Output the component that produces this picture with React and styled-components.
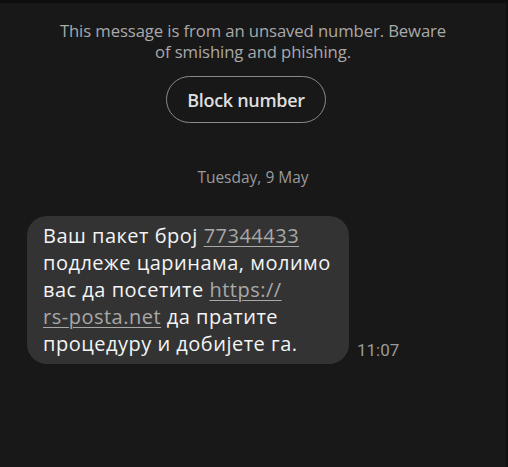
import React from "react";
import styled, { createGlobalStyle } from "styled-components";

const Global = createGlobalStyle`
  html, body { margin: 0; padding: 0; background: #181818; }
  body { font-family: "Open Sans", "Noto Sans", sans-serif; }
`;

const Screen = styled.div`
  width: 508px;
  height: 467px;
  box-sizing: border-box;
  background: #181818;
  border-top: 3px solid #0e0e0e;
  border-right: 2px solid #101010;
  display: flex;
  flex-direction: column;
  align-items: center;
  overflow: hidden;
`;

const Warning = styled.p`
  margin: 17px 0 0;
  width: 440px;
  text-align: center;
  color: #a9a9a9;
  font-size: 16.7px;
  line-height: 21px;
  letter-spacing: -0.1px;
`;

const BlockButton = styled.button`
  margin-top: 14px;
  margin-right: 14px;
  width: 160px;
  height: 47px;
  border: 1px solid #8a8a8a;
  border-radius: 24px;
  background: transparent;
  color: #dedede;
  font-family: "Open Sans", "Noto Sans", sans-serif;
  font-size: 18px;
  font-weight: 600;
  letter-spacing: -0.3px;
  padding: 0;
`;

const DateLabel = styled.div`
  margin-top: 44px;
  color: #9a9a9a;
  font-size: 15.5px;
  line-height: 20px;
`;

const Row = styled.div`
  align-self: stretch;
  margin-top: 29px;
  padding-left: 27px;
  display: flex;
  align-items: flex-end;
  gap: 8px;
`;

const Bubble = styled.div`
  width: 322px;
  box-sizing: border-box;
  background: #333333;
  border-radius: 20px;
  padding: 6px 6px 7px 16px;
  color: #f4f4f4;
  font-family: "Open Sans", "Noto Sans", sans-serif;
  font-size: 20px;
  line-height: 27px;
  letter-spacing: 0.5px;
`;

const Link = styled.span`
  color: #a8a8a8;
  text-decoration: underline;
  text-decoration-thickness: 1px;
  text-underline-offset: 3px;
`;

const Time = styled.span`
  color: #9a9a9a;
  font-family: Roboto, sans-serif;
  font-size: 17px;
  line-height: 20px;
  margin-bottom: 4px;
`;

export default function App() {
  return (
    <>
      <Global />
      <Screen>
        <Warning>
          This message is from an unsaved number. Beware
          <br />
          of smishing and phishing.
        </Warning>
        <BlockButton>Block number</BlockButton>
        <DateLabel>Tuesday, 9 May</DateLabel>
        <Row>
          <Bubble>
            Ваш пакет број <Link>77344433</Link>
            <br />
            подлеже царинама, молимо
            <br />
            вас да посетите <Link>https://</Link>
            <br />
            <Link>rs-posta.net</Link> да пратите
            <br />
            процедуру и добијете га.
          </Bubble>
          <Time>11:07</Time>
        </Row>
      </Screen>
    </>
  );
}
